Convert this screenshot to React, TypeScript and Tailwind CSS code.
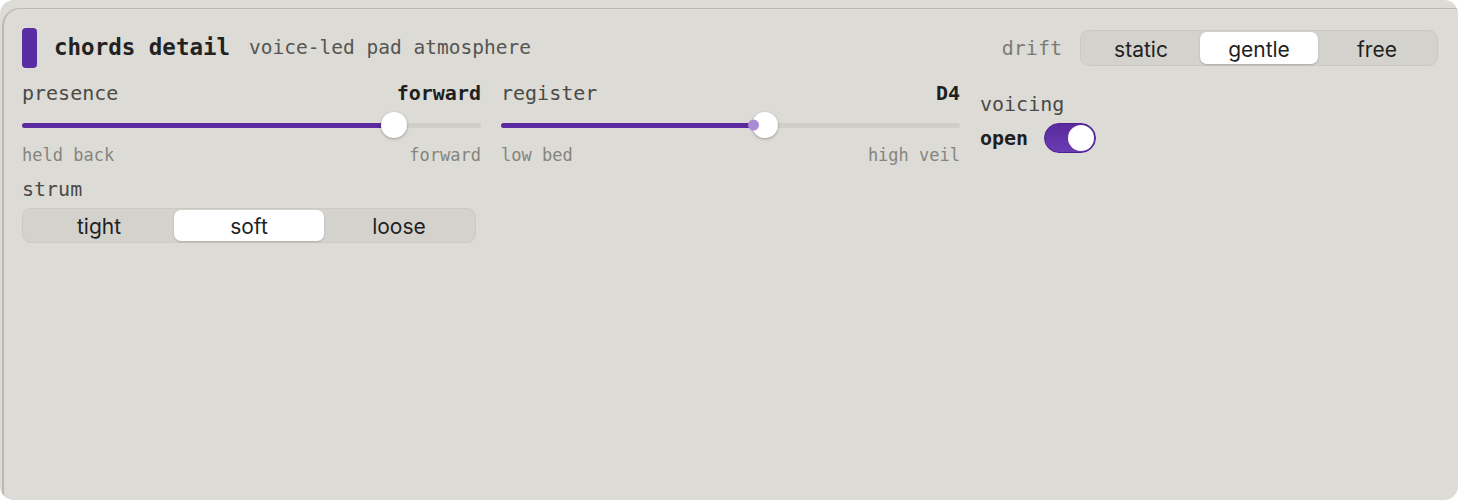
import { useState } from 'react'

const mono = { fontFamily: '"DejaVu Sans Mono", "Liberation Mono", monospace' }
const sans = { fontFamily: 'Inter, "Noto Sans", sans-serif' }

type SegProps = {
  options: string[]
  value: string
  onChange: (v: string) => void
  className?: string
}

const Segmented = ({ options, value, onChange, className = '' }: SegProps) => (
  <div
    className={`flex rounded-[9px] border border-[#cac9c4] bg-[#d3d2cd] p-[1px] ${className}`}
    style={sans}
  >
    {options.map((opt) => (
      <button
        key={opt}
        onClick={() => onChange(opt)}
        className={`flex-1 rounded-[7px] pt-[2px] text-[21px] leading-none text-[#1f1f1f] ${
          value === opt ? 'bg-white shadow-[0_1px_2px_rgba(0,0,0,0.18)]' : ''
        }`}
      >
        {opt}
      </button>
    ))}
  </div>
)

type SliderProps = {
  label: string
  value: string
  pct: number
  min: string
  max: string
  dot?: boolean
}

const Slider = ({ label, value, pct, min, max, dot }: SliderProps) => (
  <div className="flex flex-col" style={mono}>
    <div className="flex h-6 items-center justify-between text-[20px]">
      <span className="text-[#4a4a47]">{label}</span>
      <span className="font-semibold text-[#1f1f1f]">{value}</span>
    </div>
    <div className="relative flex h-10 items-center">
      <div className="h-[5px] w-full rounded-full bg-[#cfcec9]">
        <div
          className="h-full rounded-full bg-[#5a2a9e]"
          style={{ width: `${pct}%` }}
        />
      </div>
      <div
        className="absolute top-1/2 h-[26px] w-[26px] -translate-x-1/2 -translate-y-1/2 rounded-full bg-white shadow-[0_1px_3px_rgba(0,0,0,0.3)]"
        style={{ left: `${pct}%` }}
      >
        {dot && (
          <div className="absolute left-[-4px] top-1/2 h-[11px] w-[11px] -translate-y-1/2 rounded-full bg-[#a98bd6]" />
        )}
      </div>
    </div>
    <div className="flex h-[18px] items-center justify-between pt-[2px] text-[17px] leading-[18px] text-[#85847f]">
      <span>{min}</span>
      <span>{max}</span>
    </div>
  </div>
)

export default function App() {
  const [drift, setDrift] = useState('gentle')
  const [strum, setStrum] = useState('soft')
  const [open, setOpen] = useState(true)

  return (
    <div className="h-[500px] w-[1458px] bg-white">
      <div className="h-full overflow-hidden rounded-[14px] bg-[#dcdbd6] pl-[2px] pt-[8px]">
        <div className="h-full rounded-tl-[18px] border-l-2 border-t border-[#b9b8b3] pl-[18px] pr-[20px] pt-[19px]">
          <div className="flex h-10 items-center justify-between">
            <div className="flex items-center" style={mono}>
              <div className="h-10 w-[15px] rounded-[4px] bg-[#5a2ca3]" />
              <span className="ml-[17px] text-[22.5px] font-bold text-[#222]">
                chords detail
              </span>
              <span className="ml-[19px] text-[19.5px] text-[#555552]">
                voice-led pad atmosphere
              </span>
            </div>
            <div className="flex items-center gap-[18px]">
              <span className="text-[20px] text-[#7c7b76]" style={mono}>
                drift
              </span>
              <Segmented
                options={['static', 'gentle', 'free']}
                value={drift}
                onChange={setDrift}
                className="h-9 w-[358px]"
              />
            </div>
          </div>

          <div className="mt-[13px] grid grid-cols-[459px_459px_459px] gap-x-5">
            <Slider
              label="presence"
              value="forward"
              pct={81}
              min="held back"
              max="forward"
            />
            <Slider
              label="register"
              value="D4"
              pct={57.5}
              min="low bed"
              max="high veil"
              dot
            />
            <div className="flex flex-col pt-[11px]" style={mono}>
              <span className="flex h-6 items-center text-[20px] text-[#4a4a47]">
                voicing
              </span>
              <div className="mt-[7px] flex h-[30px] items-center gap-4">
                <span className="text-[20px] font-semibold text-[#1f1f1f]">open</span>
                <button
                  onClick={() => setOpen(!open)}
                  className={`flex h-[30px] w-[52px] items-center rounded-full border border-[#4b2191] p-[1px] ${
                    open
                      ? 'justify-end bg-gradient-to-b from-[#5a2a9e] to-[#6a3bb2]'
                      : 'justify-start bg-[#c5c4bf]'
                  }`}
                >
                  <span className="h-[26px] w-[26px] rounded-full bg-white" />
                </button>
              </div>
            </div>

            <div className="mt-[14px] flex flex-col" style={mono}>
              <span className="flex h-6 items-center text-[20px] text-[#4a4a47]">
                strum
              </span>
              <Segmented
                options={['tight', 'soft', 'loose']}
                value={strum}
                onChange={setStrum}
                className="mt-[7px] h-[35px] w-[454px]"
              />
            </div>
          </div>
        </div>
      </div>
    </div>
  )
}
